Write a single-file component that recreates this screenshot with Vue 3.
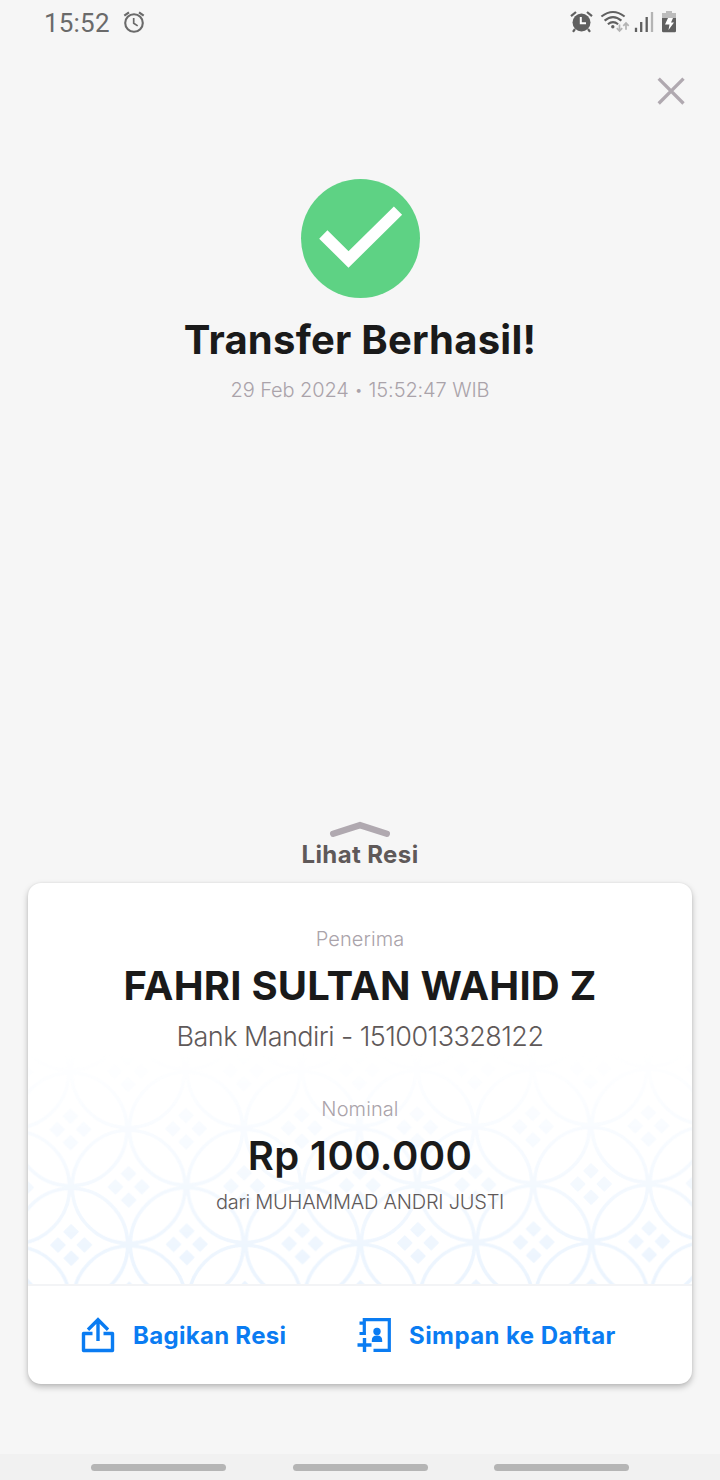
<script setup>
import { ref } from 'vue';

const hora = ref('15:52');

const transfer = ref({
    titulo: 'Transfer Berhasil!',
    dia: '29 Feb 2024',
    horario: '15:52:47 WIB',
    penerima: 'FAHRI SULTAN WAHID Z',
    rekening: 'Bank Mandiri - 1510013328122',
    nominal: 'Rp 100.000',
    pengirim: 'dari MUHAMMAD ANDRI JUSTI'
});
</script>

<template>
    <div class="tela">
        <header class="status">
            <span class="hora">{{ hora }}</span>
            <svg class="alarme" width="22" height="24" viewBox="0 0 22 24" fill="none" stroke="#6a6a6a">
                <circle cx="11" cy="13" r="8.8" stroke-width="2.1" />
                <path d="M10.700 8v5.300l4 2.600" stroke-width="1.700" />
                <path d="M1.300 5.600 6 2.300M20.700 5.600 16 2.300" stroke-width="2.200" />
            </svg>
            <svg class="sinais" width="108" height="24" viewBox="0 0 108 24">
                <circle cx="11.5" cy="12.5" r="9" fill="#606060" />
                <path d="M1 6.2 6 2M22 6.2 17 2M5 19l-2 2.8M18 19l2 2.8" fill="none" stroke="#606060" stroke-width="2.2" />
                <path d="M10.800 7v6.300H16" fill="none" stroke="#fff" stroke-width="2" />
                <g fill="none" stroke="#606060" stroke-width="2.100">
                    <path d="M31.400 6.500Q43 -2.500 54.600 6.500" />
                    <path d="M34.600 10.600Q43 3.600 51.400 10.600" />
                    <path d="M37.900 14.200Q43 10 48.100 14.200" />
                </g>
                <circle cx="42.800" cy="16.800" r="1.700" fill="#606060" />
                <path d="M49.500 14.500V21M46.800 18.200l2.700 2.800 2.700-2.800M56 19.700V13M53.300 15.800 56 13l2.700 2.800" fill="none" stroke="#b4b4b4" stroke-width="1.700" />
                <path d="M66 17.800V22M71.200 12v10M76.700 7v15" fill="none" stroke="#606060" stroke-width="2.300" />
                <path d="M82 2v20" stroke="#b4b4b4" stroke-width="2.300" />
                <path d="M96 1h6v2h4v6H92V3h4z" fill="#bcbcbc" />
                <path d="M92 8h14v13q0 1.200-1.200 1.200H93.200q-1.200 0-1.200-1.200z" fill="#606060" />
                <path d="M98 8h5l-2 4.500h3L98.500 20l1-5.500H95z" fill="#fff" />
            </svg>
        </header>

        <div class="topo">
            <svg width="28" height="28" viewBox="0 0 28 28">
                <path d="M1.700 1.700 26.500 26.500M26.500 1.700 1.700 26.500" stroke="#b0a9b0" stroke-width="3.300" />
            </svg>
        </div>

        <section class="resultado">
            <svg width="120" height="120" viewBox="0 0 120 120">
                <circle cx="60.500" cy="59.500" r="59.500" fill="#5ed284" />
                <path d="M23.300 55.500 48.500 80.500 98 31.700" fill="none" stroke="#fff" stroke-width="11.700" />
            </svg>
            <h1>{{ transfer.titulo }}</h1>
            <p class="data">
                <span>{{ transfer.dia }}</span>
                <span class="ponto">•</span>
                <span>{{ transfer.horario }}</span>
            </p>
        </section>

        <section class="puxador">
            <svg width="62" height="18" viewBox="0 0 62 18">
                <path d="M4.200 13.700 31 5.200 57.800 13.700" fill="none" stroke="#b0a9b0" stroke-width="6.400" stroke-linecap="round" />
            </svg>
            <span>Lihat Resi</span>
        </section>

        <main class="cartao">
            <div class="info">
                <svg class="batik" width="664" height="232" viewBox="0 0 664 232">
                    <defs>
                        <pattern id="kawung" width="115.600" height="115.600" patternUnits="userSpaceOnUse" patternTransform="translate(43.200 193) rotate(-0.350)">
                            <g fill="none" stroke="#ebf4fe" stroke-width="3.600">
                                <circle cx="0" cy="0" r="56.500" />
                                <circle cx="115.600" cy="0" r="56.500" />
                                <circle cx="0" cy="115.600" r="56.500" />
                                <circle cx="115.600" cy="115.600" r="56.500" />
                                <circle cx="57.800" cy="57.800" r="56.500" />
                            </g>
                            <g fill="#ebf4fe" stroke="#ebf4fe" stroke-width="2" stroke-linejoin="round">
                                <path id="losangos" d="M0-19.800 6.600-13.200 0-6.600-6.600-13.200zM0 6.600 6.600 13.200 0 19.800-6.600 13.200zM-13.200-6.600-6.600 0-13.200 6.600-19.800 0zM13.200-6.600 19.800 0 13.200 6.600 6.600 0z" />
                                <use href="#losangos" x="115.600" />
                                <use href="#losangos" y="115.600" />
                                <use href="#losangos" x="115.600" y="115.600" />
                                <use href="#losangos" x="57.800" y="57.800" />
                            </g>
                        </pattern>
                    </defs>
                    <rect width="664" height="232" fill="url(#kawung)" />
                </svg>
                <p class="rotulo">Penerima</p>
                <h2 class="nome">{{ transfer.penerima }}</h2>
                <p class="rekening">{{ transfer.rekening }}</p>
                <p class="rotulo nominal">Nominal</p>
                <h2 class="valor">{{ transfer.nominal }}</h2>
                <p class="pengirim">{{ transfer.pengirim }}</p>
            </div>
            <div class="acoes">
                <button class="bagikan">
                    <svg width="34" height="36" viewBox="0 0 34 36" fill="none" stroke="#0a7cf2">
                        <path d="M11.500 16.500H2.500V33.500H31.500V16.500H22.500" stroke-width="3.400" stroke-linejoin="round" />
                        <path d="M17 24V3M7 12.700 17 2.700 27 12.700" stroke-width="3.400" />
                    </svg>
                    <span>Bagikan Resi</span>
                </button>
                <button class="simpan">
                    <svg width="35" height="36" viewBox="0 0 35 36" fill="none" stroke="#0a7cf2">
                        <path d="M7.300 8V2.700H32.300V33.300H16.500M7.300 4.500V18" stroke-width="3.200" />
                        <path d="M2.500 6.200H7M2.500 16.500H8.500" stroke-width="3.200" />
                        <path d="M7.500 21V35M.500 28H14.500" stroke-width="3.400" />
                        <circle cx="20" cy="14.500" r="3.700" fill="#0a7cf2" stroke="none" />
                        <path d="M14.800 25v-1.500q0-5 5.200-5t5.200 5V25z" fill="#0a7cf2" stroke="none" />
                    </svg>
                    <span>Simpan ke Daftar</span>
                </button>
            </div>
        </main>

        <nav class="navegacao">
            <i></i>
            <i></i>
            <i></i>
        </nav>
    </div>
</template>

<style>
body {
    margin: 0;
    background: #f6f6f6;
}
</style>

<style scoped>
.tela {
    display: flex;
    flex-direction: column;
    width: 720px;
    height: 1480px;
    background: #f6f6f6;
    font-family: Inter, "Liberation Sans", sans-serif;
    color: #1a1a1a;
}

h1,
h2,
p {
    margin: 0;
    white-space: nowrap;
}

svg {
    display: block;
    flex: none;
}

.status {
    display: flex;
    height: 46px;
    padding: 0 42px 0 44px;
    box-sizing: border-box;
}

.hora {
    font-family: Roboto, sans-serif;
    font-size: 26px;
    line-height: 46px;
    letter-spacing: 0.2px;
    color: #6a6a6a;
}

.alarme {
    margin: 10px 0 0 13px;
}

.sinais {
    margin: 10px 0 0 auto;
}

.topo {
    display: flex;
    justify-content: flex-end;
    height: 133px;
    padding: 31px 35px 0 0;
    box-sizing: border-box;
}

.resultado {
    display: flex;
    flex-direction: column;
    align-items: center;
    height: 641px;
}

h1 {
    margin-top: 16px;
    font-size: 40px;
    font-weight: 700;
    line-height: 49px;
    letter-spacing: 0.23px;
}

.data {
    display: flex;
    gap: 6px;
    margin-top: 14px;
    font-size: 20px;
    font-weight: 350;
    line-height: 24px;
    letter-spacing: -0.1px;
    color: #aaa3aa;
}

.ponto {
    font-size: 14px;
}

.puxador {
    display: flex;
    flex-direction: column;
    align-items: center;
    height: 63px;
    font-size: 24px;
    font-weight: 650;
    line-height: 33px;
    letter-spacing: 0.4px;
    color: #5f5959;
}

.cartao {
    width: 664px;
    height: 501px;
    margin: 0 auto;
    border-radius: 13px;
    background: #fff;
    box-shadow: 0 3px 6px rgba(0, 0, 0, 0.25), 0 0 2px rgba(0, 0, 0, 0.08);
    overflow: hidden;
}

.info {
    position: relative;
    display: flex;
    flex-direction: column;
    align-items: center;
    height: 403px;
    padding-top: 44px;
    box-sizing: border-box;
    border-bottom: 2px solid #f3f4f6;
}

.info > p,
.info > h2 {
    position: relative;
}

/* fundo kawung desaparece para cima */
.batik {
    position: absolute;
    left: 0;
    bottom: 0;
    -webkit-mask-image: linear-gradient(transparent, #000);
    mask-image: linear-gradient(transparent, #000);
}

.rotulo {
    font-size: 20px;
    font-weight: 350;
    line-height: 24px;
    letter-spacing: 0.1px;
    color: #aaa3aa;
}

.nome,
.valor {
    margin-top: 10px;
    font-size: 40px;
    line-height: 49px;
    font-weight: 700;
    letter-spacing: 0.22px;
}

.valor {
    font-weight: 600;
    letter-spacing: 0.4px;
}

.rekening {
    margin-top: 11px;
    font-size: 27px;
    font-weight: 350;
    line-height: 32px;
    letter-spacing: -0.55px;
    color: #5f5959;
}

.nominal {
    margin-top: 44px;
}

.pengirim {
    margin-top: 10px;
    font-size: 20px;
    font-weight: 350;
    line-height: 24px;
    letter-spacing: -0.25px;
    color: #5f5959;
}

.acoes {
    display: flex;
    height: 98px;
}

button {
    display: flex;
    align-items: center;
    padding: 0;
    border: none;
    background: none;
    font: 650 24px/32px Inter, "Liberation Sans", sans-serif;
    letter-spacing: 0.3px;
    color: #0a7cf2;
    white-space: nowrap;
    cursor: pointer;
}

button span {
    padding-top: 2px;
}

.bagikan {
    width: 329px;
    padding-left: 53px;
    gap: 18px;
    box-sizing: border-box;
}

.simpan {
    gap: 17px;
    letter-spacing: 0.43px;
}

.navegacao {
    display: flex;
    justify-content: center;
    align-items: center;
    gap: 66.5px;
    height: 26px;
    margin-top: auto;
    background: #f1f1f1;
}

.navegacao i {
    width: 135px;
    height: 7px;
    border-radius: 4px;
    background: #b5b5b5;
}
</style>
